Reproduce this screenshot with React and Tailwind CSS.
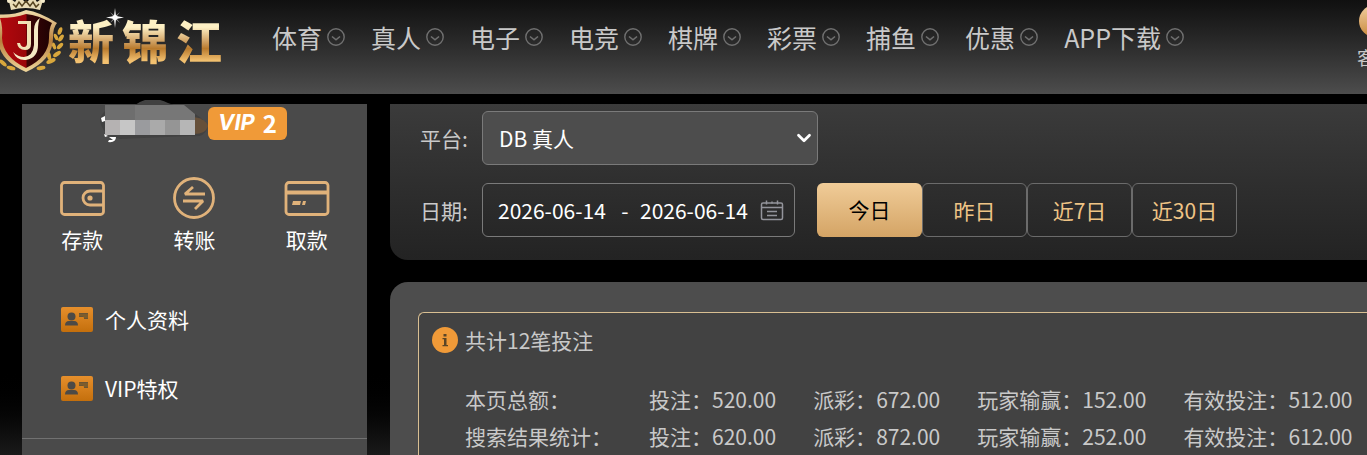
import { useState } from 'react';
import { ChevronDown } from 'lucide-react';

const navItems = ['体育', '真人', '电子', '电竞', '棋牌', '彩票', '捕鱼', '优惠', 'APP下载'];

const ranges = ['今日', '昨日', '近7日', '近30日'];

const totals = [
  { label: '本页总额：', bet: '520.00', payout: '672.00', result: '152.00', valid: '512.00' },
  { label: '搜索结果统计：', bet: '620.00', payout: '872.00', result: '252.00', valid: '612.00' },
];

function ShieldLogo() {
  return (
    <svg width="64" height="73" viewBox="0 0 64 73" className="shrink-0" aria-hidden="true">
      <defs>
        <linearGradient id="gold" x1="0" y1="0" x2="0" y2="1">
          <stop offset="0" stopColor="#f3dfae" />
          <stop offset="0.5" stopColor="#b87f3c" />
          <stop offset="1" stopColor="#f0d79c" />
        </linearGradient>
        <linearGradient id="red" x1="0" y1="0" x2="1" y2="0">
          <stop offset="0" stopColor="#b3080d" />
          <stop offset="0.5" stopColor="#9a060a" />
          <stop offset="0.52" stopColor="#3c0406" />
          <stop offset="1" stopColor="#1e0203" />
        </linearGradient>
      </defs>
      {/* crown */}
      <path d="M11 10 L8 -3 L15 2 L19 -4 L26 3 L33 -4 L37 2 L44 -3 L40 10 Q26 6 11 10Z" fill="#e9dcb6" />
      <path d="M13 4l3 3 3-5 3 4 4-5 4 5 3-4 3 5 3-3" stroke="#55431f" strokeWidth="1.5" fill="none" />
      <circle cx="9" cy="1" r="2" fill="#f6eccb" />
      <circle cx="43" cy="1" r="2" fill="#f6eccb" />
      {/* laurel */}
      <g fill="#d9a73c">
        <ellipse cx="60" cy="31" rx="2" ry="4" transform="rotate(20 60 31)" />
        <ellipse cx="61" cy="38" rx="2" ry="4" transform="rotate(35 61 38)" />
        <ellipse cx="60" cy="46" rx="2" ry="4" transform="rotate(45 60 46)" />
        <ellipse cx="57" cy="54" rx="2" ry="4.5" transform="rotate(55 57 54)" />
        <ellipse cx="51" cy="61" rx="2.2" ry="5" transform="rotate(65 51 61)" />
        <ellipse cx="41" cy="68" rx="2" ry="4.5" transform="rotate(80 41 68)" />
        <ellipse cx="56" cy="37" rx="1.8" ry="3.5" transform="rotate(-25 56 37)" />
        <ellipse cx="54" cy="46" rx="1.8" ry="3.5" transform="rotate(-20 54 46)" />
        <ellipse cx="49" cy="56" rx="2" ry="4" transform="rotate(-10 49 56)" />
        <ellipse cx="11" cy="68" rx="2" ry="4.5" transform="rotate(-75 11 68)" />
        <ellipse cx="3" cy="63" rx="2" ry="4.5" transform="rotate(-50 3 63)" />
      </g>
      <path
        d="M-5 14 Q12 16 26 10 Q40 12 57 23 Q53 27 53 38 Q53 60 26 72 Q-2 60 -2 38 Q-1 24 -5 14Z"
        fill="url(#gold)"
      />
      <path
        d="M0 18 Q15 18 26 14 Q38 15 52 23 Q49 28 49 38 Q49 57 26 68 Q3 57 2 38 Q3 27 0 18Z"
        fill="url(#red)"
      />
      <path d="M18 21h13v23q0 6-6 6-7 0-8-7l3 0q1 4 4 4 3 0 3-4V24h-9z" fill="#f1e2b5" />
      <path d="M40 18q-6 4-6 12v15q-1 11-10 12-6 0-11-5 4 9 13 8 12-2 12-15V31q0-9 2-13z" fill="#f6e9c4" />
    </svg>
  );
}

function Sparkle() {
  return (
    <svg width="18" height="20" viewBox="0 0 18 20" aria-hidden="true">
      <path d="M9 0l1 8 8 1.5-8 1.5-1 9-1-9-8-1.5L8 8z" fill="#fff" />
      <path d="M4 4l5 4 5-4-4 5.500 4 5.500-5-4-5 4 4-5.500z" fill="#fff" opacity="0.5" />
      <circle cx="9" cy="9.500" r="2.500" fill="#fff" />
    </svg>
  );
}

function CircleCaret() {
  return (
    <svg width="18" height="18" viewBox="0 0 18 18" fill="none" stroke="#707070" aria-hidden="true">
      <circle cx="9" cy="9" r="8.200" strokeWidth="1.400" />
      <path d="M5 8.500l4 3.300 4-3.300" strokeWidth="1.600" />
    </svg>
  );
}

function WalletIcon() {
  return (
    <svg width="46" height="42" viewBox="0 0 46 42" fill="none" stroke="#e0b27a" strokeWidth="2.800" aria-hidden="true">
      <rect x="2.500" y="5.500" width="42" height="32" rx="3" />
      <path d="M44 14H31a7 7 0 0 0 0 14h13" />
      <circle cx="31" cy="21" r="2.600" fill="#e0b27a" stroke="none" />
    </svg>
  );
}

function TransferIcon() {
  return (
    <svg width="42" height="42" viewBox="0 0 42 42" fill="none" stroke="#e0b27a" strokeWidth="2.800" aria-hidden="true">
      <circle cx="21" cy="21" r="19.500" />
      <path d="M32 17H12l8-7M10 24h20l-8 8" strokeLinejoin="bevel" />
    </svg>
  );
}

function CardIcon() {
  return (
    <svg width="46" height="42" viewBox="0 0 46 42" fill="none" stroke="#e0b27a" strokeWidth="2.800" aria-hidden="true">
      <rect x="2" y="5.500" width="42" height="32" rx="3" />
      <path d="M2 15.500h42" strokeWidth="4" />
      <path d="M8 28l1-4h8l-1 4zM18 28l1-4h3l-1 4z" fill="#e0b27a" stroke="none" />
    </svg>
  );
}

function ProfileIcon() {
  return (
    <svg width="32" height="25" viewBox="0 0 32 25" aria-hidden="true">
      <defs>
        <linearGradient id="badge" x1="0" y1="0" x2="0" y2="1">
          <stop offset="0" stopColor="#e68f2c" />
          <stop offset="1" stopColor="#c46f0c" />
        </linearGradient>
      </defs>
      <rect width="32" height="25" rx="2" fill="url(#badge)" />
      <circle cx="10.500" cy="9.500" r="4" fill="#4d4a46" />
      <path d="M4 18.500q0-4.500 4-4.500h5q4 0 4 4.500z" fill="#4d4a46" />
      <path d="M18 6h9v6h-4v-2h-5z" fill="#6a5535" />
      <path d="M18 8h9M22 10h5" stroke="#a26a1e" strokeWidth="0.700" />
    </svg>
  );
}

function CalendarIcon() {
  return (
    <svg width="24" height="21" viewBox="0 0 24 21" fill="none" stroke="#93949b" strokeWidth="1.500" aria-hidden="true">
      <rect x="1.500" y="3" width="21" height="16.500" rx="1.500" />
      <path d="M2 7.500h20M6.500 0.500v4M17.500 0.500v4M12 1.500v2M7 11.500h10M7 15.500h10" />
    </svg>
  );
}

/* Account name with a pixelated mask over it */
function MaskedName() {
  return (
    <svg width="108" height="46" viewBox="0 0 108 46" className="shrink-0" role="img" aria-label="账号已隐藏">
      <path d="M0 20Q2 4 35 5Q50-6 68 3L88 10Q108 20 107 29Q104 38 90 36L20 39Q2 36 0 20Z" fill="#414141" />
      <path d="M94 17q12 2 14 9-2 8-14 8z" fill="#66503a" />
      <path d="M1 18l4-2v5l-3 1zM4 34l4 2-3 1zM9 37h7q0 6-8 5l1-2h4z" fill="#fff" />
      <path d="M5 5h30v15H5z" fill="#6e6e6e" />
      <path d="M35 5h49l11 9v6H35z" fill="#777" />
      <path d="M5 20h15v15H5z" fill="#b5b2b2" />
      <path d="M20 20h15v15H20z" fill="#c6c6c6" />
      <path d="M35 20h15v15H35z" fill="#9a9b9e" />
      <path d="M50 20h15v15H50z" fill="#aaa" />
      <path d="M65 20h15v15H65z" fill="#959595" />
      <path d="M80 20h15v15H80z" fill="#b6b6b6" />
    </svg>
  );
}

const actions = [
  { label: '存款', icon: <WalletIcon /> },
  { label: '转账', icon: <TransferIcon /> },
  { label: '取款', icon: <CardIcon /> },
];

function Header() {
  return (
    <header className="flex h-[94px] items-start overflow-hidden bg-linear-to-b from-[#101010] to-[#4d4d4d]">
      <a href="#home" className="relative flex w-[272px] shrink-0">
        <ShieldLogo />
        <span className="mt-3 ml-1 flex gap-2 bg-linear-to-b from-[#fdf0c4] from-25% via-[#b87a2c] via-60% to-[#f3c170] to-80% bg-clip-text text-[46px] leading-[54px] font-black text-transparent">
          <span>新</span>
          <span>锦</span>
          <span>江</span>
        </span>
        <span className="absolute top-2 left-[106px]">
          <Sparkle />
        </span>
      </a>

      <nav className="flex gap-[26px] pt-[19px]">
        {navItems.map((item) => (
          <a
            key={item}
            href="#nav"
            className="flex shrink-0 items-center gap-[5px] text-[25px] leading-9 whitespace-nowrap text-[#c9c9c9]"
          >
            {item}
            <CircleCaret />
          </a>
        ))}
      </nav>

      <a href="#service" className="-mr-7 ml-auto flex w-10 shrink-0 flex-col items-center gap-2 pt-[5px] text-lg leading-6 text-[#c9c9c9]">
        <span className="size-8 rounded-full bg-linear-to-b from-[#f0cfa0] to-[#c98a3a]" />
        <span className="whitespace-nowrap">客服</span>
      </a>
    </header>
  );
}

function Sidebar() {
  return (
    <aside className="w-[345px] shrink-0 bg-[#4a4a4a] text-white">
      <div className="-mt-1 flex h-[46px] items-center pl-[78px]">
        <MaskedName />
        <span className="flex h-[33px] w-[79px] items-center justify-center gap-2 rounded-md bg-[#f09a38] text-2xl font-bold">
          <span className="font-[Inter] text-[22px] italic">VIP</span>2
        </span>
      </div>

      <div className="grid grid-cols-3 px-1 pt-[31px]">
        {actions.map((a) => (
          <button key={a.label} type="button" className="flex flex-col items-center gap-1 text-[21px] leading-8">
            {a.icon}
            {a.label}
          </button>
        ))}
      </div>

      <ul className="mt-[30px] border-b border-[#717171] pb-[15px] text-[21px] leading-[69px]">
        {['个人资料', 'VIP特权'].map((item) => (
          <li key={item}>
            <a href="#profile" className="flex items-center gap-3 pl-[39px]">
              <ProfileIcon />
              {item}
            </a>
          </li>
        ))}
      </ul>
    </aside>
  );
}

function Filters() {
  const [range, setRange] = useState('今日');
  const [start, setStart] = useState('2026-06-14');
  const [end, setEnd] = useState('2026-06-14');

  return (
    <form className="flex flex-col gap-[18px] rounded-bl-[18px] bg-linear-to-b from-[#3b3b3b] to-[#232323] pt-[7px] pb-[23px] pl-[30px] text-[21px]">
      <div className="flex items-center">
        <label htmlFor="platform" className="w-[62px] shrink-0 pt-0.5 text-[#c9c9c9]">平台:</label>
        <div className="relative w-[336px]">
          <select
            id="platform"
            className="h-[54px] w-full appearance-none rounded-md border border-[#7a7a7a] bg-[#4d4d4d] pt-0.5 pl-4 text-white"
          >
            <option>DB 真人</option>
          </select>
          <ChevronDown size={22} strokeWidth={3} className="pointer-events-none absolute top-4 right-[3px] text-white" />
        </div>
      </div>

      <div className="flex items-center">
        <label htmlFor="start" className="w-[62px] shrink-0 pt-0.5 text-[#c9c9c9]">日期:</label>
        <div className="mr-[22px] flex h-[54px] w-[313px] shrink-0 items-center rounded-md border border-[#7a7a7a] pl-[15px] text-white">
          <input
            id="start"
            type="text"
            value={start}
            onChange={(e) => setStart(e.target.value)}
            className="w-[112px] bg-transparent pt-0.5 outline-none"
          />
          <span className="w-[30px] pt-0.5 text-center">-</span>
          <input
            type="text"
            aria-label="结束日期"
            value={end}
            onChange={(e) => setEnd(e.target.value)}
            className="mr-2 w-[112px] bg-transparent pt-0.5 outline-none"
          />
          <CalendarIcon />
        </div>
        {ranges.map((r) => (
          <button
            key={r}
            type="button"
            onClick={() => setRange(r)}
            className={
              r === range
                ? 'h-[54px] w-[105px] shrink-0 rounded-md bg-linear-to-b from-[#f0cc98] to-[#d4a465] text-black'
                : 'h-[54px] w-[105px] shrink-0 rounded-md border border-[#6b6b6b] pt-0.5 text-[#efc486]'
            }
          >
            {r}
          </button>
        ))}
      </div>
    </form>
  );
}

function Summary() {
  return (
    <section className="mt-[22px] flex grow flex-col rounded-tl-[18px] bg-[#4d4d4d] pt-[30px] pl-7 text-[21px] text-[#c9c9c9]">
      <div className="grow rounded-tl-md border-t border-l border-[#d9bf92] bg-[#424242] pt-[10px] pl-[13px]">
        <div className="flex items-center gap-[7px] leading-[34px]">
          <svg width="26" height="26" viewBox="0 0 26 26" aria-hidden="true">
            <circle cx="13" cy="13" r="13" fill="#f09a38" />
            <path d="M11.500 7h3v2.500h-3zM10.500 11h4v7H16v1.300h-5.500V18H12v-5.700h-1.500z" fill="#5a4526" />
          </svg>
          共计12笔投注
        </div>

        <table className="mt-6 ml-[33px] leading-[37px] whitespace-nowrap">
          <tbody>
            {totals.map((t) => (
              <tr key={t.label}>
                <th scope="row" className="pr-[37px] text-left font-normal">{t.label}</th>
                <td className="pr-[37px]">投注：{t.bet}</td>
                <td className="pr-[37px]">派彩：{t.payout}</td>
                <td className="pr-[37px]">玩家输赢：{t.result}</td>
                <td>有效投注：{t.valid}</td>
              </tr>
            ))}
          </tbody>
        </table>
      </div>
    </section>
  );
}

export default function App() {
  return (
    <div className="flex min-h-screen flex-col overflow-hidden bg-linear-to-b from-black from-80% to-[#1a1a1a] font-['Noto_Sans_CJK_SC',sans-serif]">
      <Header />
      <div className="flex grow gap-[23px] pt-[10px] pl-[22px]">
        <Sidebar />
        <main className="flex min-w-0 grow flex-col">
          <Filters />
          <Summary />
        </main>
      </div>
    </div>
  );
}
